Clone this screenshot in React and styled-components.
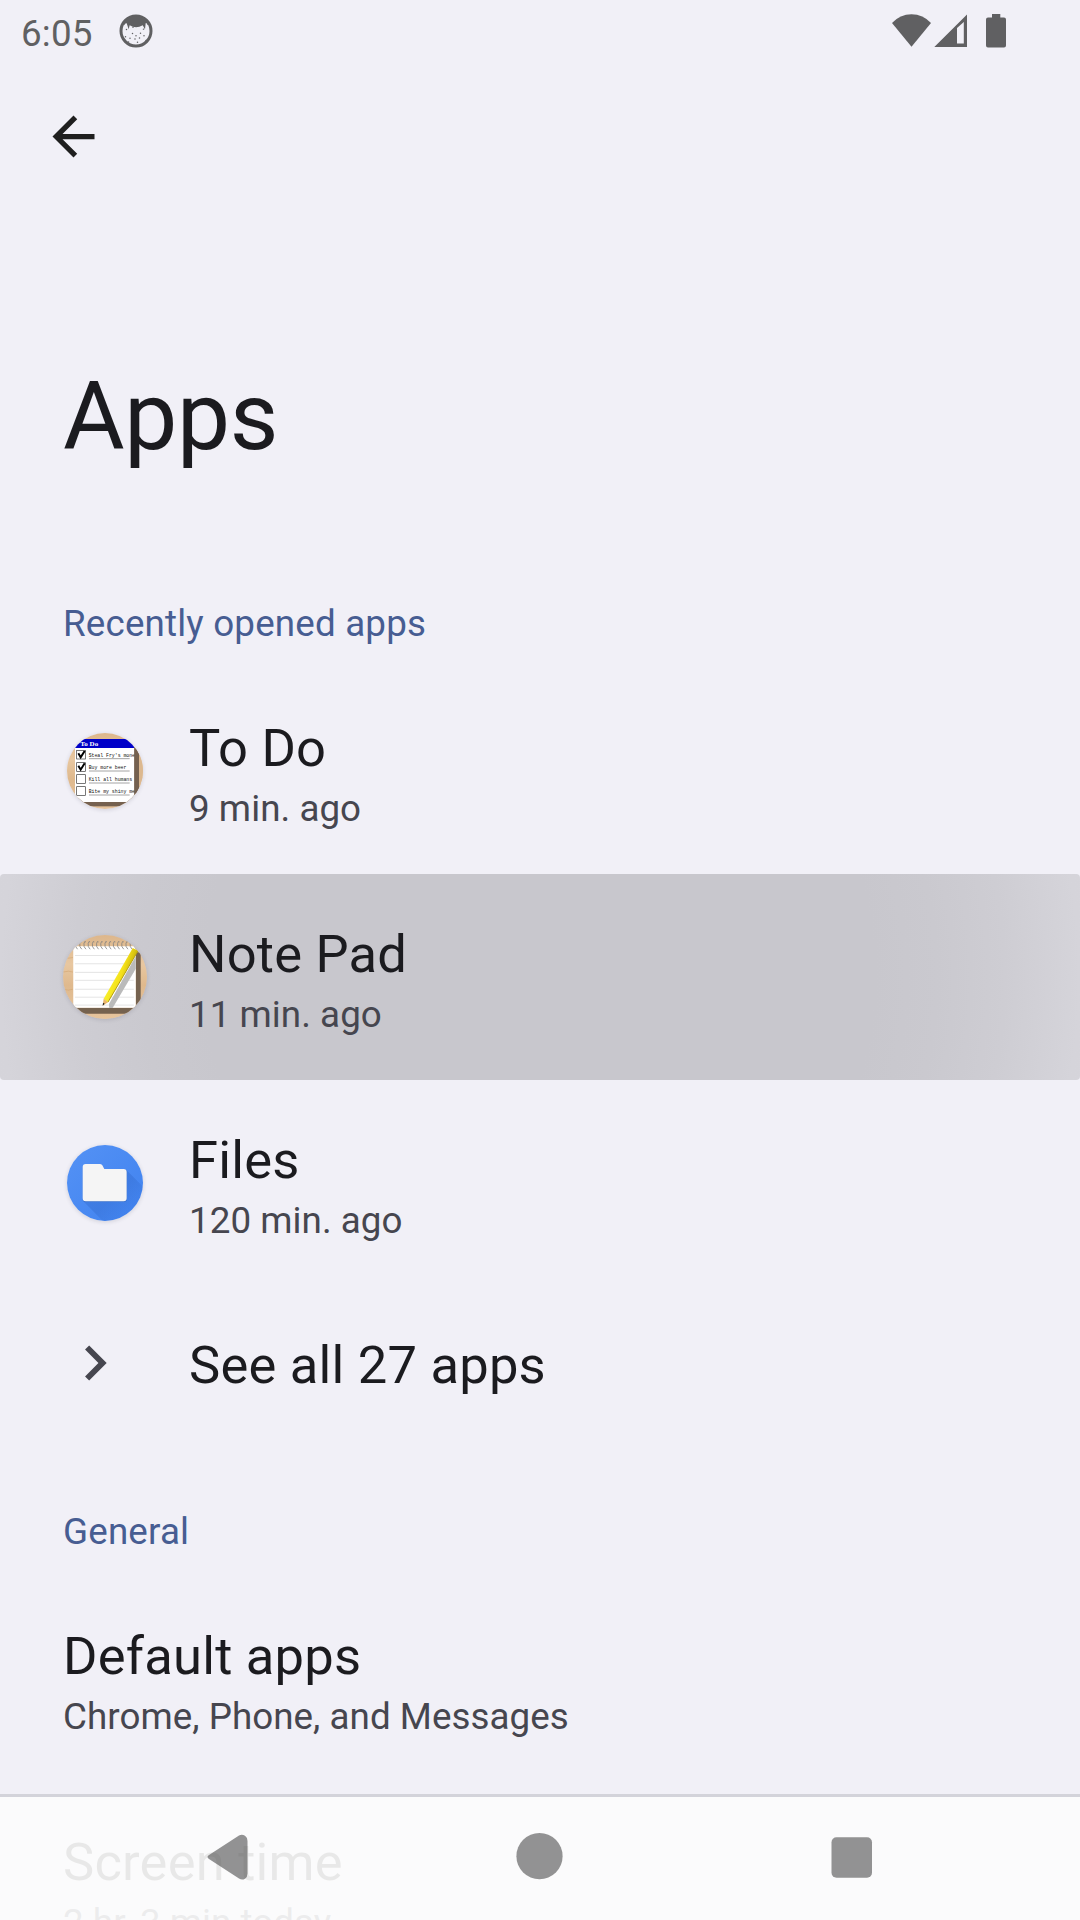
import React from "react";
import styled, { createGlobalStyle } from "styled-components";

const GlobalStyle = createGlobalStyle`
  * { box-sizing: border-box; }
  body { margin: 0; background: #f1f0f7; font-family: Roboto, "Noto Sans", sans-serif; }
`;

const Screen = styled.main`
  position: relative;
  width: 1080px;
  height: 1920px;
  overflow: hidden;
  display: flex;
  flex-direction: column;
  background: #f1f0f7;
  color: #1b1b1f;
`;

const StatusBar = styled.header`
  flex: none;
  height: 63px;
  padding: 0 72px 0 21px;
  display: flex;
  justify-content: space-between;
  align-items: flex-start;
  color: #606062;
`;

const StatusGroup = styled.div`
  display: flex;
  align-items: flex-start;
`;

const StatusGlyph = styled.svg`
  display: block;
  margin-top: 14px;
`;

const Clock = styled.time`
  width: 98px;
  font-size: 36.75px;
  line-height: 43px;
  padding-top: 12px;
  letter-spacing: 0.2px;
`;

const Toolbar = styled.div`
  flex: none;
  height: 147px;
  padding-left: 42px;
  display: flex;
  align-items: center;
`;

const IconButton = styled.button`
  display: flex;
  padding: 0;
  border: 0;
  background: none;
  color: #1f1f1f;
`;

const Title = styled.h1`
  flex: none;
  height: 332px;
  margin: 0;
  padding: 151px 63px 0;
  font-size: 94.5px;
  line-height: 111px;
  font-weight: 400;
  letter-spacing: -0.3px;
`;

const SectionLabel = styled.h2`
  flex: none;
  height: ${(p) => p.$height}px;
  margin: 0;
  padding: 0 63px 23px;
  display: flex;
  align-items: flex-end;
  font-size: 36.75px;
  line-height: 43px;
  font-weight: 400;
  letter-spacing: 0.18px;
  color: #475d92;
`;

const Row = styled.div`
  flex: none;
  height: ${(p) => (p.$single ? 156 : 206)}px;
  padding: 0 63px;
  display: flex;
  align-items: center;
  border-radius: 4px;
  background: ${(p) =>
    p.$pressed
      ? "radial-gradient(circle 620px at 540px 103px, #c8c7cd 0, #c8c7cd 54%, #cac9cf 64%, #cecdd3 75%, #d5d4da 87%, #d7d6dc 100%)"
      : "transparent"};
`;

const IconSlot = styled.div`
  flex: none;
  width: 126px;
  display: flex;
  color: #46464f;
`;

const ChevronGlyph = styled.svg`
  display: block;
  margin: -2px 0 0 -3px;
`;

const AppIcon = styled.svg`
  display: block;
  width: ${(p) => p.$size}px;
  height: ${(p) => p.$size}px;
  margin-left: ${(p) => 42 - p.$size / 2}px;
  border-radius: 50%;
  box-shadow: 0 1px 4px rgba(40, 40, 60, 0.16);
`;

const RowText = styled.div`
  display: flex;
  flex-direction: column;
  padding-top: ${(p) => (p.$single ? 2 : 5)}px;
`;

const RowTitle = styled.span`
  font-size: 52.5px;
  line-height: 70px;
  letter-spacing: 0.22px;
`;

const RowSummary = styled.span`
  font-size: 36.75px;
  line-height: 51px;
  letter-spacing: 0.05px;
  color: #46464f;
`;

const NavBar = styled.nav`
  position: absolute;
  left: 0;
  right: 0;
  bottom: 0;
  height: 126px;
  display: grid;
  grid-template-columns: 207px 309px 315px 1fr;
  border-top: 3px solid #d3d3da;
  background: rgba(252, 252, 252, 0.912);
  background-clip: padding-box;
  color: rgba(76, 76, 76, 0.6);

  svg { display: block; margin-top: 36px; }
`;

const NavSpacer = styled.span``;

function CatFace() {
  const dots = [[126,87],[139,81],[160,86],[138,98],[161,104],[124,107],[143,113],[152,110],[165,117],[130,121],[148,122],[133,111],[154,97],[145,104]];
  return (
    <StatusGlyph width="34" height="34" viewBox="110 74 102 102">
      <circle cx="161" cy="125" r="45" fill="none" stroke="currentColor" strokeWidth="9" />
      <path d="M122 97Q160 65 200 97L196 108Q192 98 190 102L188 120L181 108Q161 120 142 108L139 120L133 102Q128 101 126 108Z" fill="currentColor" />
      {dots.map(([x, y]) => (
        <circle key={`${x}-${y}`} cx={(x - 145) * 1.5 + 161} cy={(y - 102) * 1.1 + 137} r="2.2" fill="currentColor" />
      ))}
    </StatusGlyph>
  );
}

function StatusIcons() {
  return (
    <StatusGlyph width="117" height="34" viewBox="891 14 117 34" fill="currentColor">
      <path d="M911.5 46.7L892 23Q900 14.2 911.5 14.2T931 23Z" />
      <path fillRule="evenodd" d="M934.3 47L967 14.5V47ZM957 28V43.5H963.8V22Z" />
      <path d="M992 14H1000.3V17.4H1004Q1006 17.4 1006 19.4V45.6Q1006 47.6 1004 47.6H988Q986 47.6 986 45.6V19.4Q986 17.4 988 17.4H992Z" />
    </StatusGlyph>
  );
}

function Wood({ id }) {
  return (
    <linearGradient id={id} x1="0" y1="0" x2="0" y2="1">
      <stop offset="0" stopColor="#ddb78c" />
      <stop offset=".35" stopColor="#e8c7a0" />
      <stop offset=".6" stopColor="#dfb98d" />
      <stop offset="1" stopColor="#e6c49d" />
    </linearGradient>
  );
}

function ToDoIcon() {
  const items = [
    { y: 134, text: "Steal Fry's money", done: true },
    { y: 171, text: "Buy more beer", done: true },
    { y: 207, text: "Kill all humans" },
    { y: 243, text: "Bite my shiny metal" },
  ];
  return (
    <AppIcon $size={76} viewBox="51 69 228 228">
      <defs><Wood id="woodTodo" /></defs>
      <rect x="51" y="69" width="228" height="228" fill="url(#woodTodo)" />
      <rect x="84" y="112" width="184" height="177" fill="#75614f" />
      <rect x="75" y="87" width="178" height="189" fill="#fff" />
      <rect x="75" y="87" width="178" height="27" fill="#0000c8" />
      <text x="91" y="108" fontFamily="Liberation Serif, serif" fontWeight="700" fontSize="21" fill="#fff">To Do</text>
      {items.map(({ y, text, done }) => (
        <g key={y}>
          <rect x="80" y={y - 13} width="26" height="26" fill="#fff" stroke="#333" strokeWidth="2" />
          {done && <path d={`M85 ${y - 4}l7 12l12-19`} fill="none" stroke="#000" strokeWidth="6" />}
          <text x="116" y={y + 6} fontFamily="Liberation Mono, monospace" fontSize="14.5" fill="#111">{text}</text>
          <path d={`M117 ${y + 12}H239`} stroke="#777" strokeWidth="2" />
        </g>
      ))}
      <path d="M253 110h14v166h-14z" fill="#75614f" />
      <path d="M267 110h12v180h-12z" fill="#dcb88f" />
    </AppIcon>
  );
}

function NotePadIcon() {
  const rings = Array.from({ length: 15 }, (_, i) => 78 + i * 12.7);
  return (
    <AppIcon $size={84} viewBox="38 44 254 254">
      <defs>
        <Wood id="woodNote" />
        <linearGradient id="pencil" x1="0" y1="0" x2="1" y2=".5">
          <stop offset=".4" stopColor="#f7ee2a" />
          <stop offset=".6" stopColor="#f5e11a" />
          <stop offset="1" stopColor="#a89300" />
        </linearGradient>
      </defs>
      <rect x="38" y="44" width="254" height="254" fill="url(#woodNote)" />
      <path d="M38 112q20 4 30 0M38 156q18-5 30 0M38 208q18 5 30 0" stroke="#d3a875" strokeWidth="2" fill="none" />
      <path d="M76 264h182V96h15v186H90z" fill="#75624f" />
      <rect x="69" y="78" width="189" height="186" fill="#fff" />
      {[106, 131, 157, 181, 208, 232, 256].map((y) => (
        <path key={y} d={`M74 ${y}H252`} stroke="#dedede" strokeWidth="2.5" />
      ))}
      {rings.map((x) => (
        <path key={x} d={`M${x + 4} 87Q${x - 4} 80 ${x - 2} 70Q${x} 60 ${x + 4} 65`} fill="none" stroke="#808080" strokeWidth="2.4" />
      ))}
      <path d="M258 108L177 253L178 265H188L258 146Z" fill="#bababa" />
      <path d="M249 83L265 92L174 247L161 237Z" fill="url(#pencil)" />
      <path d="M265 92L174 247" stroke="#b39d10" strokeWidth="3" />
      <path d="M161 236L174 247L158 258Z" fill="#e9b56b" />
      <path d="M159 249l5 3-6 6z" fill="#222" />
    </AppIcon>
  );
}

function FilesIcon() {
  return (
    <AppIcon $size={76} viewBox="51 45 228 228">
      <defs>
        <linearGradient id="blue" x1="0" y1="0" x2="1" y2="1">
          <stop offset="0" stopColor="#5492f5" />
          <stop offset="1" stopColor="#4082ef" />
        </linearGradient>
        <linearGradient id="longShadow" x1="0" y1="0" x2="1" y2="1">
          <stop offset=".4" stopColor="#2458b8" stopOpacity=".26" />
          <stop offset=".68" stopColor="#2458b8" stopOpacity="0" />
        </linearGradient>
      </defs>
      <rect x="51" y="45" width="228" height="228" fill="url(#blue)" />
      <path d="M229 120L320 211V320H205L100 214Z" fill="url(#longShadow)" />
      <path d="M107 104H149Q154 104 157 108L163 118H222Q231 118 231 127V207Q231 216 222 216H107Q98 216 98 207V113Q98 104 107 104Z" fill="#3469bf" opacity=".65" />
      <path d="M107 102H149Q154 102 157 106L163 117H221Q230 117 230 126V205Q230 214 221 214H107Q98 214 98 205V111Q98 102 107 102Z" fill="#f5f5f5" />
    </AppIcon>
  );
}

function Item({ icon, title, summary, pressed }) {
  const single = !summary;
  return (
    <Row $single={single} $pressed={pressed}>
      {icon && <IconSlot>{icon}</IconSlot>}
      <RowText $single={single}>
        <RowTitle>{title}</RowTitle>
        {summary && <RowSummary>{summary}</RowSummary>}
      </RowText>
    </Row>
  );
}

const Chevron = () => (
  <ChevronGlyph width="70" height="70" viewBox="0 0 24 24" fill="currentColor">
    <path d="M10 6L8.59 7.41 13.17 12l-4.58 4.59L10 18l6-6z" />
  </ChevronGlyph>
);

export default function App() {
  return (
    <>
      <GlobalStyle />
      <Screen>
        <StatusBar>
          <StatusGroup>
            <Clock>6:05</Clock>
            <CatFace />
          </StatusGroup>
          <StatusIcons />
        </StatusBar>
        <Toolbar>
          <IconButton aria-label="Back">
            <svg width="63" height="63" viewBox="0 0 24 24" fill="currentColor">
              <path d="M20 11H7.83l5.59-5.59L12 4l-8 8 8 8 1.41-1.41L7.83 13H20v-2z" />
            </svg>
          </IconButton>
        </Toolbar>
        <Title>Apps</Title>
        <SectionLabel $height={126}>Recently opened apps</SectionLabel>
        <Item icon={<ToDoIcon />} title="To Do" summary="9 min. ago" />
        <Item icon={<NotePadIcon />} title="Note Pad" summary="11 min. ago" pressed />
        <Item icon={<FilesIcon />} title="Files" summary="120 min. ago" />
        <Item icon={<Chevron />} title="See all 27 apps" />
        <SectionLabel $height={134}>General</SectionLabel>
        <Item title="Default apps" summary="Chrome, Phone, and Messages" />
        <Item title="Screen time" summary="2 hr, 3 min today" />
        <NavBar>
          <NavSpacer />
          <svg width="41" height="48" viewBox="207 1833 41 48" fill="currentColor">
            <path d="M209 1855L239 1835.5Q242 1833.8 245 1835.8Q247.5 1837.5 247.5 1841V1873.5Q247.5 1877 245 1878.7Q242 1880.5 239 1878.5L209 1859Q206 1857 209 1855Z" />
          </svg>
          <svg width="47" height="47" viewBox="0 0 47 47" fill="currentColor">
            <circle cx="23.5" cy="23.2" r="23.1" />
          </svg>
          <svg width="42" height="46" viewBox="0 0 42 46" fill="currentColor">
            <rect x=".5" y="4.2" width="40.5" height="40.5" rx="5" />
          </svg>
        </NavBar>
      </Screen>
    </>
  );
}
